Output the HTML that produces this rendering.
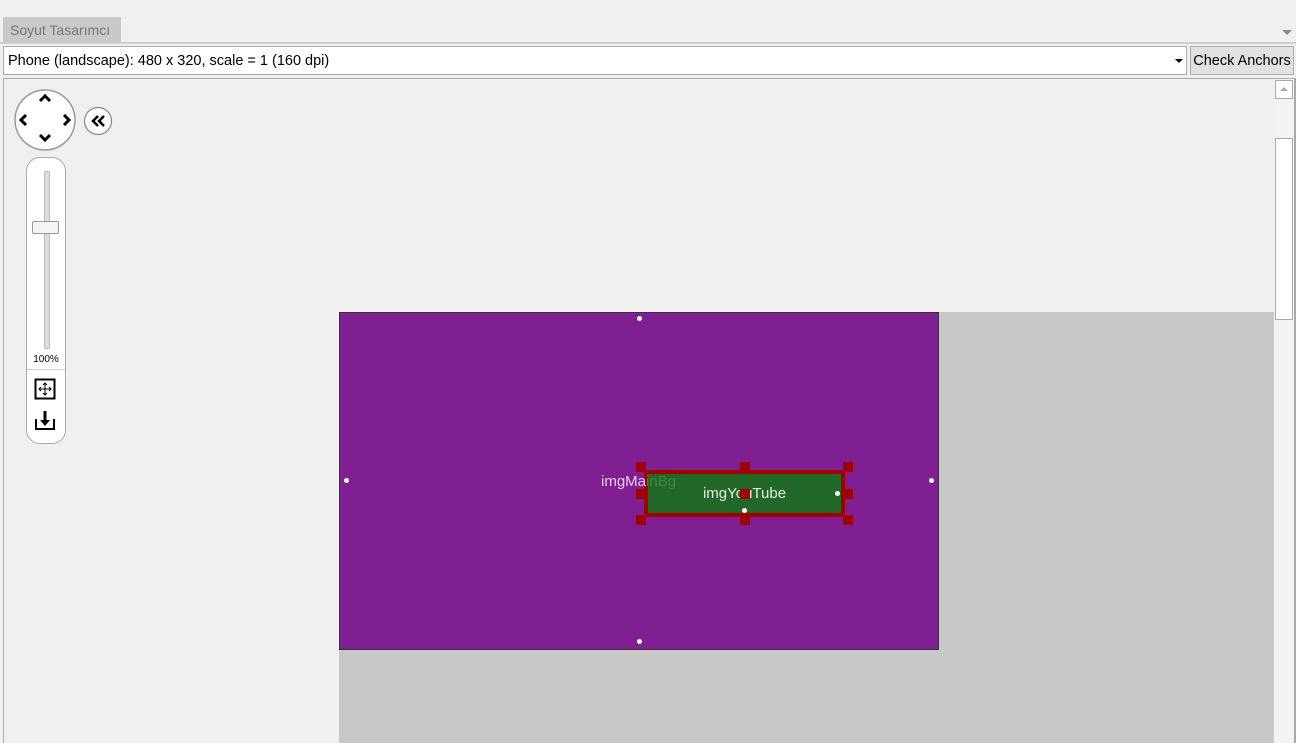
<!DOCTYPE html>
<html><head><style>
body{margin:0;width:1296px;height:743px;background:#f0f0f0;font-family:"Liberation Sans",sans-serif;position:relative;overflow:hidden}
.a{position:absolute}
.h{width:10px;height:10px;background:#a00000;position:absolute;border-radius:1px}
.d{width:5px;height:5px;border-radius:50%;background:#fff;position:absolute}
</style></head><body>
<div class="a" style="left:3px;top:17px;width:118px;height:25px;background:#c9c9c9;color:#777;font-size:14px;line-height:27px;padding-left:7px;box-sizing:border-box">Soyut Tasarımcı</div>
<div class="a" style="left:1282px;top:30px;width:0;height:0;border-left:5px solid transparent;border-right:5px solid transparent;border-top:5px solid #888"></div>
<div class="a" style="left:0;top:42px;width:1296px;height:2px;background:#cfcfcf"></div>
<div class="a" style="left:3px;top:46px;width:1184px;height:29px;background:#fff;border:1px solid #aaa;box-sizing:border-box;font-size:14.5px;line-height:28px;padding-left:4px">Phone (landscape): 480 x 320, scale = 1 (160 dpi)</div>
<div class="a" style="left:1175px;top:59px;width:0;height:0;border-left:4px solid transparent;border-right:4px solid transparent;border-top:4px solid #000"></div>
<div class="a" style="left:1190px;top:46px;width:104px;height:29px;background:#e1e1e1;border:1px solid #adadad;box-sizing:border-box;font-size:14.5px;line-height:29px;text-align:center">Check Anchors</div>
<div class="a" style="left:3px;top:78px;width:1293px;height:1px;background:#aaa"></div>
<div class="a" style="left:3px;top:78px;width:1px;height:665px;background:#aaa"></div>
<div class="a" style="left:1274px;top:79px;width:20px;height:664px;background:#f3f3f3"></div>
<div class="a" style="left:1294px;top:79px;width:2px;height:664px;background:#aaa"></div>
<div class="a" style="left:1275px;top:80px;width:18px;height:19px;background:#fff;border:1px solid #aaa;box-sizing:border-box"></div>
<div class="a" style="left:1280px;top:87px;width:0;height:0;border-left:4px solid transparent;border-right:4px solid transparent;border-bottom:4px solid #aaa"></div>
<div class="a" style="left:1275px;top:138px;width:18px;height:182px;background:#fff;border:1px solid #aaa;box-sizing:border-box"></div>
<div class="a" style="left:339px;top:312px;width:935px;height:431px;background:#c8c8c8"></div>
<div class="a" style="left:339px;top:312px;width:600px;height:338px;background:#7f1f91;border:1px solid #333;box-sizing:border-box"></div>
<div class="a" style="left:644px;top:470px;width:201px;height:47px;background:#236728;border:4px solid #a00000;box-sizing:border-box;color:#e0f0e0;font-size:15px;line-height:40px;text-align:center">imgYouTube</div>
<div class="a" style="left:601px;top:473px;color:#e8d0ee;font-size:15px;z-index:2">imgMa<span style="color:#3a8a3a">inBg</span></div>
<div class="h" style="left:636px;top:462px"></div><div class="h" style="left:740px;top:462px"></div><div class="h" style="left:843px;top:462px"></div>
<div class="h" style="left:636px;top:489px"></div><div class="h" style="left:740px;top:489px"></div><div class="h" style="left:843px;top:489px"></div>
<div class="h" style="left:636px;top:515px"></div><div class="h" style="left:740px;top:515px"></div><div class="h" style="left:843px;top:515px"></div>
<div class="d" style="left:637px;top:316px"></div><div class="d" style="left:637px;top:639px"></div>
<div class="d" style="left:344px;top:478px"></div><div class="d" style="left:929px;top:478px"></div>
<div class="d" style="left:742px;top:508px"></div><div class="d" style="left:835px;top:491px"></div>
<svg class="a" style="left:13px;top:88px" width="64" height="64"><circle cx="32" cy="32" r="30" fill="#fff" stroke="#999" stroke-width="1.5"/><g fill="none" stroke="#000" stroke-width="3"><path d="M27 13l5-5 5 5M27 47l5 5 5-5M13 27l-5 5 5 5M51 27l5 5-5 5"/></g></svg>
<svg class="a" style="left:83px;top:106px" width="30" height="30"><circle cx="15" cy="15" r="13.5" fill="#fff" stroke="#888" stroke-width="1.2"/><path d="M15 10l-5 5 5 5M21 10l-5 5 5 5" fill="none" stroke="#000" stroke-width="2.5"/></svg>
<div class="a" style="left:26px;top:157px;width:40px;height:287px;background:#fff;border:1px solid #aaa;border-radius:14px;box-sizing:border-box"></div>
<div class="a" style="left:44px;top:171px;width:4px;height:176px;background:#ddd;border:1px solid #bbb;border-radius:2px"></div>
<div class="a" style="left:32px;top:221px;width:27px;height:13px;background:#f4f4f4;border:1px solid #999;border-radius:2px;box-sizing:border-box"></div>
<div class="a" style="left:26px;top:354px;width:40px;font-size:10px;text-align:center">100%</div>
<div class="a" style="left:27px;top:369px;width:38px;height:1px;background:#ccc"></div>
<svg class="a" style="left:34px;top:378px" width="22" height="22"><rect x="1.5" y="1.5" width="19" height="19" fill="none" stroke="#000" stroke-width="2"/><path d="M11 5v12M5 11h12" stroke="#000"/><path d="M9 7l2-2 2 2M9 15l2 2 2-2M7 9l-2 2 2 2M15 9l2 2-2 2" fill="none" stroke="#000"/></svg>
<svg class="a" style="left:34px;top:409px" width="22" height="22"><path d="M2 10v10h18V10" fill="none" stroke="#000" stroke-width="2"/><path d="M11 2v12" stroke="#000" stroke-width="3"/><path d="M6 11l5 6 5-6z" fill="#000"/></svg>
</body></html>
